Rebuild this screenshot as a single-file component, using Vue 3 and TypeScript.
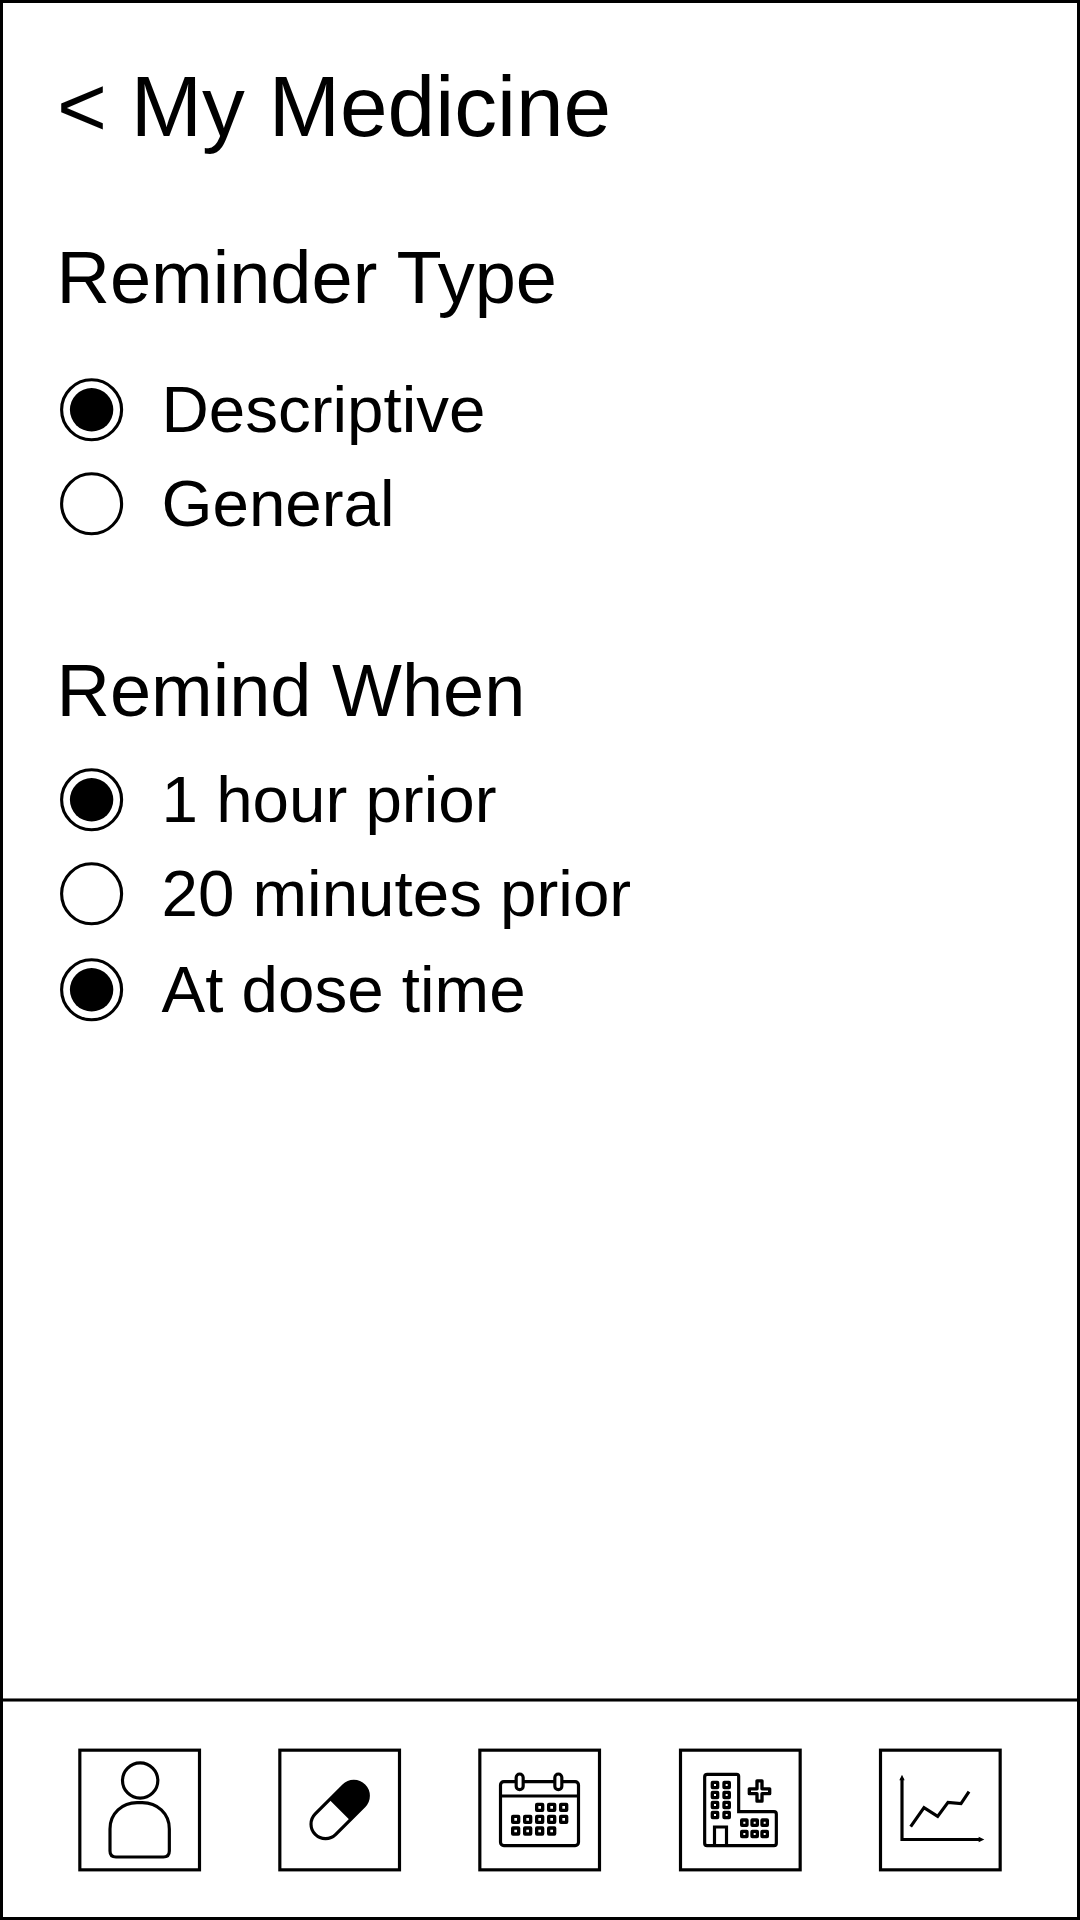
<script setup lang="ts">
interface Option {
  label: string
  selected: boolean
}

interface Group {
  id: string
  title: string
  options: Option[]
}

interface Cell {
  x: number
  y: number
}

const groups: Group[] = [
  {
    id: 'type',
    title: 'Reminder Type',
    options: [
      { label: 'Descriptive', selected: true },
      { label: 'General', selected: false },
    ],
  },
  {
    id: 'when',
    title: 'Remind When',
    options: [
      { label: '1 hour prior', selected: true },
      { label: '20 minutes prior', selected: false },
      { label: 'At dose time', selected: true },
    ],
  },
]

const grid = (xs: number[], ys: number[]): Cell[] =>
  ys.flatMap((y) => xs.map((x) => ({ x, y })))

const days: Cell[] = [
  ...grid([209, 245, 281], [202]),
  ...grid([137, 173, 209, 245, 281], [238]),
  ...grid([137, 173, 209, 245], [273]),
]

const windows: Cell[] = [
  ...grid([135, 170], [135, 165, 195, 225]),
  ...grid([223, 254, 284], [248, 282]),
]
</script>

<template>
  <div class="screen">
    <main class="content">
      <h1 class="title">&lt; My Medicine</h1>
      <section v-for="group in groups" :key="group.id" class="group" :class="group.id">
        <h2 class="heading">{{ group.title }}</h2>
        <div class="options">
          <div v-for="option in group.options" :key="option.label" class="option">
            <svg class="radio" viewBox="0 0 64 64">
              <circle cx="31.600" cy="31.800" r="30" fill="none" stroke="#000" stroke-width="3.100" />
              <circle v-if="option.selected" cx="31.600" cy="31.800" r="21.700" />
            </svg>
            <span class="label">{{ option.label }}</span>
          </div>
        </div>
      </section>
    </main>

    <nav class="nav">
      <svg class="icon" viewBox="0 0 420 420">
        <rect x="29.5" y="30.5" width="359" height="359" />
        <circle cx="210.500" cy="121.500" r="53" />
        <path d="M120 267c0-47 37-79 81-79h16c44 0 81 32 81 79v66q0 18-18 18H138q-18 0-18-18z" />
      </svg>
      <svg class="icon" viewBox="0 0 420 420">
        <rect x="29.5" y="30.5" width="359" height="359" />
        <g transform="translate(209 210) rotate(-45)">
          <rect x="-103.500" y="-43.500" width="207" height="87" rx="43.500" />
          <path class="solid" d="M0-43.500H60a43.500 43.500 0 0 1 0 87H0z" />
        </g>
      </svg>
      <svg class="icon" viewBox="0 0 420 420">
        <rect x="29.5" y="30.5" width="359" height="359" />
        <rect x="91.500" y="125" width="234" height="192" rx="10" />
        <path d="M92 168H326" />
        <rect class="ring" x="138.500" y="102" width="21" height="47" rx="10.500" />
        <rect class="ring" x="254.500" y="102" width="21" height="47" rx="10.500" />
        <rect v-for="(c, i) in days" :key="i" class="cell" :x="c.x - 9" :y="c.y - 9" width="18" height="18" rx="1" />
      </svg>
      <svg class="icon" viewBox="0 0 420 420">
        <rect x="31.5" y="30.5" width="359" height="359" />
        <path d="M112 103H200q6 0 6 6V215H312q7 0 7 7V310q0 7-7 7H111q-7 0-7-7V110q0-7 8-7z" />
        <path d="M133.500 317V261H169.500V317" />
        <path class="cross" d="M261 122.500H276V146.500H299V161H276V183.500H261V161H238V146.500H261z" />
        <rect v-for="(c, i) in windows" :key="i" class="cell" :x="c.x - 8" :y="c.y - 8" width="16" height="16" rx="1" />
      </svg>
      <svg class="icon" viewBox="0 0 420 420">
        <rect x="31.5" y="30.5" width="359" height="359" />
        <path d="M96 115V298.500H330" />
        <path class="solid" d="M96 104L104 121H88zM343 298.500L326 306.500V290.500z" />
        <path d="M122 260L162 203L203 229L234 187L273 191L297 155" />
      </svg>
    </nav>
  </div>
</template>

<style>
body {
  margin: 0;
  background: #fff;
}
</style>

<style scoped>
.screen {
  box-sizing: border-box;
  width: 1080px;
  height: 1920px;
  border: 3px solid #000;
  display: flex;
  flex-direction: column;
  background: #fff;
  color: #000;
  font-family: "Liberation Sans", Arial, sans-serif;
  overflow: hidden;
}

.content {
  flex: 1;
  padding: 54px 0 0 53.5px;
}

.title,
.heading {
  margin: 0;
  font-weight: 400;
  white-space: nowrap;
}

.title {
  padding-left: 0.5px;
  font-size: 85.6px;
  line-height: 100px;
}

.heading {
  font-size: 74px;
  line-height: 80px;
}

.type {
  margin-top: 81px;
}

.type .options {
  margin-top: 45px;
}

.when {
  margin-top: 100px;
}

.when .options {
  margin-top: 22px;
}

.options {
  display: flex;
  flex-direction: column;
}

.option {
  display: flex;
  align-items: center;
  height: 94px;
}

.when .option:last-child {
  height: 98px;
}

.radio {
  width: 64px;
  height: 64px;
  margin-left: 3px;
}

.label {
  margin-left: 38px;
  font-size: 65.5px;
  line-height: 72px;
  white-space: nowrap;
}

.nav {
  box-sizing: border-box;
  height: 219px;
  padding: 42px 0 0 67px;
  display: flex;
  gap: 60px;
  background: linear-gradient(#777 1px, #000 1px, #000 3px, #777 3px, #777 4px, #fff 4px);
}

.icon {
  flex: none;
  width: 140px;
  height: 140px;
  fill: none;
  stroke: #000;
  stroke-width: 9.5;
}

.icon .ring {
  fill: #fff;
}

.icon .solid {
  fill: #000;
  stroke: none;
}

.icon .cell,
.icon .cross {
  stroke-width: 10;
  stroke-linejoin: round;
}
</style>
